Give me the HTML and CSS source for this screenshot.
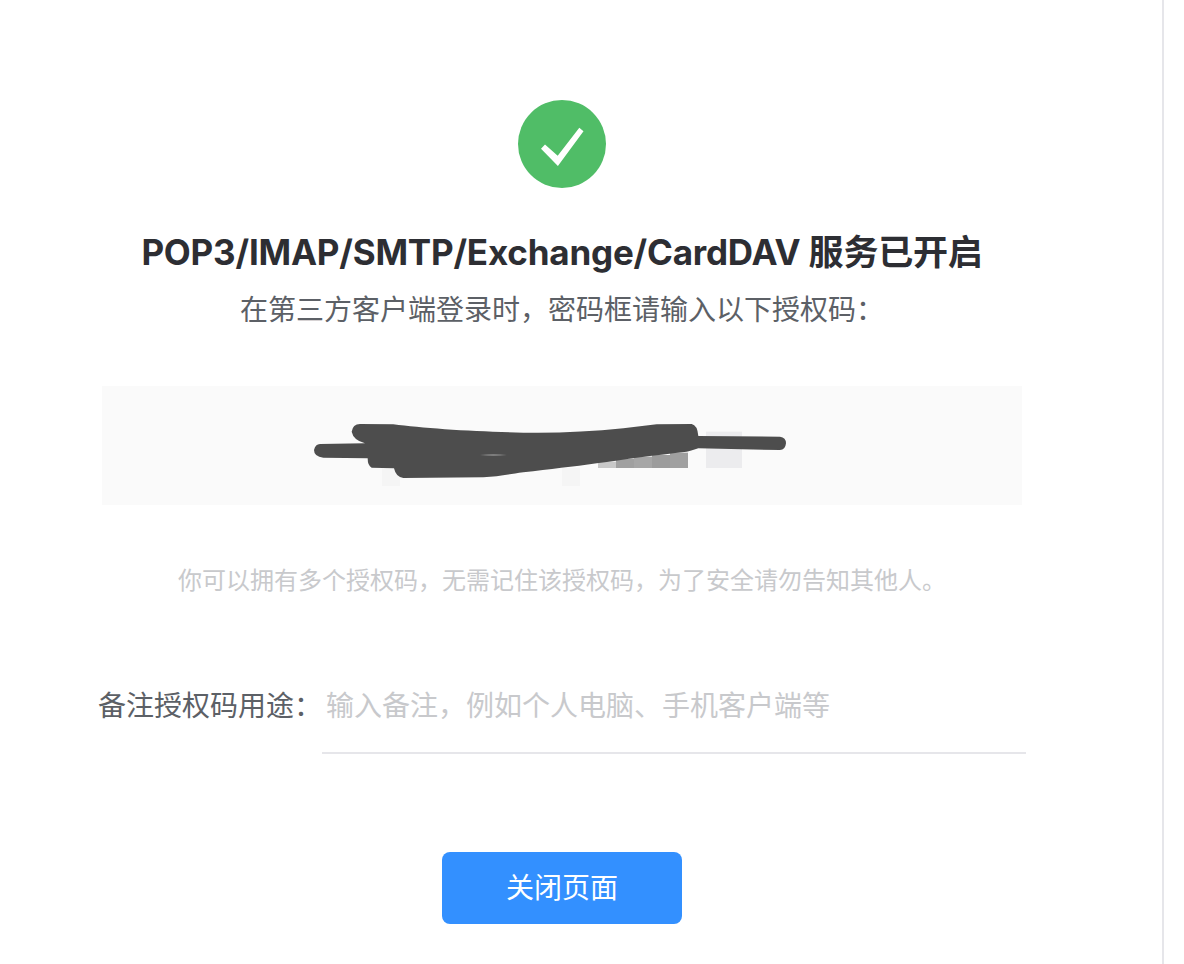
FILE: index.html
```html
<!DOCTYPE html>
<html lang="zh-CN">
<head>
  <meta charset="UTF-8">
  <title>服务已开启</title>
  <meta name="viewport" content="width=device-width, initial-scale=1">
  <link rel="stylesheet" href="styles.css">
</head>
<body>

<main class="page">
  <svg class="success-icon" viewBox="0 0 88 88" aria-hidden="true">
    <circle cx="44" cy="44" r="44" fill="#50bd67"/>
    <polygon fill="#fff" points="23,48.7 27,44.4 39.7,55.8 61.3,27.8 65.5,31.3 39.9,66"/>
  </svg>

  <h1 class="title">POP3/IMAP/SMTP/Exchange/CardDAV 服务已开启</h1>
  <p class="subtitle">在第三方客户端登录时，密码框请输入以下授权码：</p>

  <div class="code-box">
    <svg class="code-scribble" viewBox="-564 18 2760 357" aria-hidden="true">
      <rect x="924" y="245" width="54" height="19" fill="#c8c8c8"/>
      <rect x="978" y="236" width="54" height="28" fill="#a0a0a0"/>
      <rect x="1032" y="230" width="54" height="34" fill="#a6a6a6"/>
      <rect x="1086" y="225" width="54" height="39" fill="#9c9c9c"/>
      <rect x="1140" y="218" width="54" height="46" fill="#a0a0a0"/>
      <rect x="1248" y="155" width="108" height="109" fill="#ececee"/>
      <rect x="276" y="264" width="54" height="54" fill="#f5f5f5"/>
      <rect x="816" y="264" width="54" height="54" fill="#f5f5f5"/>
      <path fill="#4d4d4d" d="M185 155 Q188 133 210 132 L310 133 C400 145 550 155 700 158 C800 160 900 155 1000 145 L1100 133 L1205 132 Q1222 135 1225 168 L1470 170 Q1488 172 1488 190 Q1486 210 1470 210 L1225 205 Q1200 214 1190 215 C1100 225 1000 238 920 250 C850 260 780 268 700 277 C650 284 620 290 580 292 L340 294 Q318 292 312 265 L245 263 Q233 258 233 235 L100 233 Q72 230 72 210 Q76 192 90 192 L225 190 Q190 180 185 155 Z"/>
      <path fill="#8f8f8f" d="M570 225 Q610 221 650 225 Q610 229 570 225 Z"/>
    </svg>
  </div>

  <p class="notice">你可以拥有多个授权码，无需记住该授权码，为了安全请勿告知其他人。</p>

  <div class="remark-row">
    <label class="remark-label" for="remark">备注授权码用途：</label>
    <input class="remark-input" id="remark" type="text" placeholder="输入备注，例如个人电脑、手机客户端等">
  </div>

  <button class="close-btn">关闭页面</button>
</main>

</body>
</html>
```

FILE: styles.css
```css
body {
  margin: 0;
  height: 964px;
  overflow: hidden;
  background: #fff;
  font-family: Inter, "Noto Sans CJK SC", sans-serif;
}

.page {
  box-sizing: border-box;
  width: 1164px;
  height: 964px;
  padding: 100px 136px 0 98px;
  border-right: 2px solid #e6e6ea;
  display: flex;
  flex-direction: column;
  align-items: center;
}

.success-icon {
  display: block;
  width: 88px;
  height: 88px;
  flex: none;
}

.title {
  margin: 40px 0 0;
  font-size: 35px;
  line-height: 48px;
  font-weight: 700;
  letter-spacing: -0.2px;
  color: #2d2e33;
  white-space: nowrap;
}

.subtitle {
  margin: 14px 0 0;
  font-size: 28px;
  line-height: 40px;
  color: #5c6066;
}

.code-box {
  width: 920px;
  height: 119px;
  margin-top: 56px;
  background: #fafafa;
  flex: none;
}

.code-scribble {
  display: block;
  width: 100%;
  height: 100%;
}

.notice {
  margin: 56px 0 0;
  font-size: 24px;
  line-height: 40px;
  color: #c8c9cc;
}

.remark-row {
  display: flex;
  width: 928px;
  margin-top: 85px;
}

.remark-label {
  flex: none;
  font-size: 28px;
  line-height: 40px;
  color: #5c6066;
}

.remark-input {
  flex: 1;
  min-width: 0;
  padding: 0 4px 26px;
  border: none;
  border-bottom: 2px solid #e6e6ea;
  outline: none;
  font-family: inherit;
  font-size: 28px;
  line-height: 40px;
  color: #5c6066;
}

.remark-input::placeholder {
  color: #c8c9cc;
}

.close-btn {
  width: 240px;
  height: 72px;
  margin-top: 98px;
  padding: 0 0 4px;
  flex: none;
  border: none;
  border-radius: 8px;
  background: #3390ff;
  color: #fff;
  font-family: inherit;
  font-size: 28px;
  cursor: pointer;
}
```
